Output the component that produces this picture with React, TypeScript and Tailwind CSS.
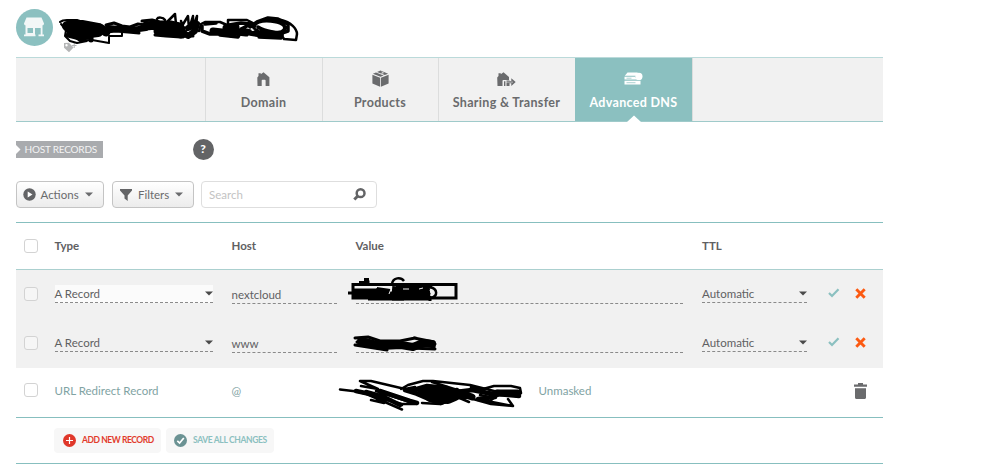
import React, { useState } from 'react';

const Caret: React.FC<{ className?: string }> = ({ className }) => (
  <svg className={className} width="8" height="5" viewBox="0 0 8 5" fill="currentColor">
    <path d="M0 0.5h8L4 4.6z" />
  </svg>
);

const StoreLogo: React.FC = () => (
  <svg className="-ml-px" width="38" height="38" viewBox="0 0 38 38">
    <circle cx="19.500" cy="19.500" r="18.500" fill="#8bc0c0" />
    <g fill="#f2f7f7">
      <path d="M11.500 9.500h15l2.500 6c0 1.200-.6 1.800-1.600 1.800H10.600C9.600 17.300 9 16.700 9 15.500z" />
      <path d="M10.500 17h17v3h-17zM10.500 19h2v7.500h-2zM25.700 19h1.800v7.500h-1.800zM18 19h2v8h-2zM12 25h7v1.500h-7zM9 26.500h11.500v1.700H9zM23.500 26.500H29v1.700h-5.500z" />
    </g>
  </svg>
);

const HouseIcon: React.FC = () => (
  <svg width="13" height="14" viewBox="0 0 13 14" fill="#6a6b6d">
    <path d="M.3 5.500L1.500 4V1.200h2.300v1L6.500.2l5.900 5V14H8.600V8.500c0-.5-.3-.8-.8-.8H5.500c-.5 0-.8.3-.8.8V14H.5z" />
  </svg>
);

const BoxIcon: React.FC = () => (
  <svg width="17" height="17" viewBox="0 0 17 17" fill="#6a6b6d">
    <path d="M.4 4.700l7.700 3v9L.4 13.500zM16.600 4.700l-7.700 3v9l7.700-3.200z" />
    <path d="M.9 3.700L4 2.400l7.700 3.100-3.200 1.300zM5 2L8.500.5l7.600 3.200-3.300 1.400z" />
    <path d="M9.500 2l2 .8-2.200.9" fill="none" stroke="#f1f1f1" strokeWidth=".7" />
  </svg>
);

const TransferIcon: React.FC = () => (
  <svg width="19" height="14" viewBox="0 0 19 14" fill="#6a6b6d">
    <path d="M.2 5.500L1.500 4V1.200h2.300v1L6.500.2l5.500 4.800V8H6.500c-.6 0-1 .4-1 1v5H.5z" />
    <path d="M7 9.300h1.400V14H7zM9.500 9h4.800V6.200l4.400 3.900-4.400 3.800v-2.600H9.500zM9.500 8.500h3v5.500h-3z" />
    <path d="M9 10.100h7" stroke="#f1f1f1" strokeWidth=".6" />
  </svg>
);

const ServerIcon: React.FC = () => (
  <svg width="19" height="13" viewBox="0 0 19 13" fill="#fff">
    <path d="M3.500.5h10.300L12 3.800H.8zM.5 4.700h10.800c.3 1.500 1.300 2.400 2.700 2.800H.5zM.5 8.800h16v3.700H.5z" />
    <circle cx="14.900" cy="4.400" r="3.600" />
    <path d="M2.500 6.200h5M2.500 10.700h9" stroke="#8bc0c0" strokeWidth=".7" />
  </svg>
);

const tabs = [
  { label: 'Domain', icon: <HouseIcon />, width: 'w-[117px]' },
  { label: 'Products', icon: <BoxIcon />, width: 'w-[116px]' },
  { label: 'Sharing & Transfer', icon: <TransferIcon />, width: 'w-[137px]' },
  { label: 'Advanced DNS', icon: <ServerIcon />, width: 'w-[117px]' },
];

const Checkbox: React.FC = () => (
  <span className="-mt-px ml-2 block h-[14px] w-[14px] rounded-[3px] border border-[#d3d3d3] bg-white/40" />
);

const Select: React.FC<{ value: string; className: string }> = ({ value, className }) => (
  <div className={`-mt-px flex h-[18px] items-center justify-between border-b border-dashed border-[#8a8a8a] ${className}`}>
    <span>{value}</span>
    <Caret className="text-[#4a4a4a]" />
  </div>
);

const rowGrid = 'grid grid-cols-[39px_177px_124px_346.500px_119px_26px_28px]';

interface RecordRowProps {
  host: string;
  active?: boolean;
}

const RecordRow: React.FC<RecordRowProps> = ({ host, active }) => (
  <div className={`${rowGrid} h-[49px] items-center bg-[#f1f1f1] text-[11.500px] text-[#5f6062]`}>
    <Checkbox />
    <Select value="A Record" className={active ? 'w-[158px] bg-[#fbfbfb]' : 'w-[158px]'} />
    <div className="mt-px h-[18px] w-[105px] border-b border-dashed border-[#8a8a8a]">{host}</div>
    <div className="mt-px h-[18px] w-[327px] border-b border-dashed border-[#8a8a8a]" />
    <Select value="Automatic" className="w-[105px]" />
    <svg className="ml-[7px] -mt-[3px]" width="12" height="10" viewBox="0 0 12 10" fill="none">
      <path d="M1 5l3 3 6.500-6.800" stroke="#8bc0c0" strokeWidth="2.200" />
    </svg>
    <svg className="ml-2 -mt-[3px]" width="11" height="11" viewBox="0 0 11 11">
      <path d="M1.300 1.300l8.400 8.400M9.700 1.300L1.300 9.700" stroke="#fc5a12" strokeWidth="2.900" />
    </svg>
  </div>
);

const Scribbles: React.FC = () => (
  <svg
    className="pointer-events-none absolute left-0 top-0"
    width="1000"
    height="474"
    viewBox="0 0 1000 474"
    fill="none"
    stroke="#000"
    strokeWidth="2"
    strokeLinejoin="round"
    strokeLinecap="round"
  >
    {/* domain name */}
    <path d="M60 22L63 20.500L67 20L77 20L83 22M61 24L66 30L65 36L70 41L77 43L87 41M74 37L80 41L92 40L109 43L109 37M109 36L122 36L122 33" />
    <path strokeWidth="10" d="M67 26L82 25L98 28L98 32L82 34L72 31Z" />
    <path strokeWidth="5" d="M68 35L80 38L91 37L91 40" />
    <path strokeWidth="9" d="M100 28L106 32" />
    <path strokeWidth="3" d="M106 25L114 23L122 26L130 27L138 24L145 25M106 32L116 31L128 32L139 33" />
    <path strokeWidth="6" d="M108 28L120 29L132 30L146 28" />
    <path strokeWidth="9" d="M146 26L156 25L168 27L181 29M158 31L170 32L182 34" />
    <path strokeWidth="3" d="M142 21L152 20L160 22L171 22L180 24M155 35L166 36L181 37M193 36L182 36" />
    <path strokeWidth="2.500" d="M157 19C158 17 163 17 165 20M168 21L175 14L176 24M182 26L188 16L189 29L193 16L193 28L197 16L196 30M181 21L185 33" />
    <path strokeWidth="6" d="M182 31L188 36L195 31L197 24L188 28" />
    <path strokeWidth="2.500" d="M199 31L201 24L205 22L220 22L227 25L229 29M228 20L247 20L253 23M228 20L228 24" />
    <path strokeWidth="3.500" d="M202 26L202 31L210 34L222 34M205 24L216 23M220 35L238 37L240 33M250 34L262 36M259 37L281 38L282 35" />
    <path strokeWidth="7" d="M213 31L222 32L232 34M226 28L236 27M228 31L246 33M263 33L280 35" />
    <path strokeWidth="3.500" d="M229 25L241 23L251 24L241 29L250 31M250 27L257 22L268 18L278 19L288 24L288 31L279 34M254 28C254 22 262 20 271 21S287 25 284 30S264 31 258 27M250 33L268 31L281 34M256 30L263 35" />
    <path strokeWidth="2.500" d="M281 20C291 22 297 29 297 34L296 40L284 39L282 36" />
    {/* first record */}
    <g strokeLinejoin="miter" strokeLinecap="butt">
      <path strokeWidth="3" d="M353 284.500h103v13.500H353z" />
      <path strokeWidth="9" d="M354 293h28M368 296h62" />
      <path strokeWidth="8" d="M376 291l14 2M392 290l24 2 14-2M400 296l22-5" />
      <path strokeWidth="5" d="M359 283.500h8v-3h2M396 286h36M404 298h-12M416 296l14-3" />
      <path strokeWidth="3" d="M364 279.500h5M348 293h8M430 296v5" />
      <path strokeWidth="2.500" d="M392 284c1-7 9-7 12-3M430 287c8 2 8 9 1 11" />
      <path stroke="#f1f1f1" strokeWidth="1" d="M357 287.500h20M403 289h6M419 289l4-1M391 289l-2 5M430 290l1 3" />
    </g>
    {/* second record */}
    <path strokeWidth="3" d="M355 338l13-1 12 4 20 0 15-3 20 6M355 345l32 5M414 338l20 4v7M410 348l25 1M357 342l30 8" />
    <path strokeWidth="8" d="M361 341l20 5 20-1 12 2 10-4 9 1M366 343l21 3" />
    {/* redirect target */}
    <path strokeWidth="2.500" d="M340 389.500l17 2M361 386l17 3-18 -8M360 381l11 0 34 8 10-2M355 391L386 399L402 405M362 392L402 409.500M371 400L384 403L372 396L402 404L416 404L376 391M401 389l7-4 15-4 10 0 37 4 32 8M432 382l38 12M483 389l11-3h17l9 2 1 5-24-2M480 395l14 3-6 4-6-3M487 401l26 5-5-7M513 406l-22-2-18-5M422 403l18 1 10-3M455 396l14 6" />
    <path strokeWidth="4.500" d="M356 391l28 6 16 8M366 392l18 5 12 6M380 391l30 10 7 2M410 391l17-5 20 2-30 6 14 6 10 3 13-6 12 0M405 390l26 8M423 388l14 7 20-5-24 10M447 393l25-3 25 5M478 399l17-2M472 387l15 6 32 3" />
    <path strokeWidth="10" d="M422 391l23 0 9 3M430 397l18 2 7-3" />
    <path strokeWidth="7" d="M497 393h21M456 392l16 5" />
  </svg>
);

const App: React.FC = () => {
  const [activeTab, setActiveTab] = useState('Advanced DNS');

  return (
    <div className="relative h-[474px] w-[1000px] overflow-hidden bg-white pl-[15.500px] font-['Lato',sans-serif] text-[#5f6062]">
      <div className="w-[867.500px]">
        <header className="flex h-[57px] pt-2">
          <StoreLogo />
          <svg className="ml-2.5 mt-[34px]" width="14" height="11" viewBox="0 0 14 11" fill="#b4b5b6">
            <path fillRule="evenodd" d="M1 1l5-.3 4.500 4.800L6 10.300 1 5.800zM3.500 2a1.200 1.200 0 100 2.400 1.200 1.200 0 000-2.400z" />
            <path d="M10.700 1h1v2h1.800v1h-1.800v2h-1V4H9V3h1.700z" />
          </svg>
        </header>

        <nav className="flex h-[65px] border-b border-t border-b-[#9fcaca] border-t-[#bbdada] bg-[#f1f1f1] pl-[189px]">
          {tabs.map((tab) => (
            <button
              key={tab.label}
              onClick={() => setActiveTab(tab.label)}
              className={`relative flex flex-col items-center border-l pt-3 ${tab.width} ${
                activeTab === tab.label ? 'border-[#8bc0c0] bg-[#8bc0c0] text-white' : 'border-[#dcdddd] text-[#6a6b6d]'
              }`}
            >
              <span className="flex h-[17px] items-center">{tab.icon}</span>
              <span className="mt-[7px] whitespace-nowrap text-[12.500px] font-bold leading-[18px] tracking-[0.32px]">{tab.label}</span>
              {activeTab === tab.label && (
                <svg className="absolute -bottom-px left-[51px]" width="14" height="7" viewBox="0 0 14 7" fill="#fff">
                  <path d="M0 7l7-6.500L14 7z" />
                </svg>
              )}
            </button>
          ))}
          <div className="border-l border-[#dcdddd]" />
        </nav>

        <div className="mt-4 flex h-[22px] items-center">
          <div className="flex h-[17px] w-[87px] items-center bg-[#a9abae] text-[10px] text-[#f4f4f4]">
            <svg width="5" height="9" viewBox="0 0 5 9" fill="#fff">
              <path d="M0 0l4.500 4.500L0 9z" />
            </svg>
            <span className="ml-1 whitespace-nowrap tracking-[-0.2px]">HOST RECORDS</span>
          </div>
          <span className="ml-[90px] flex h-[21px] w-[21px] items-center justify-center rounded-full bg-[#636466] text-[12px] font-black text-white">?</span>
        </div>

        <div className="mt-[21px] flex h-[27px] text-[11.500px] text-[#6a6b6d]">
          <button className="flex w-[88.500px] items-center rounded-[4px] border border-[#c4c4c4] bg-gradient-to-b from-white to-[#ececec] pl-1.5">
            <svg className="shrink-0" width="13" height="13" viewBox="0 0 13 13">
              <circle cx="6.500" cy="6.500" r="6.200" fill="#636466" />
              <path d="M4.700 3.500l4.800 3-4.800 3z" fill="#fff" />
            </svg>
            <span className="ml-[5px]">Actions</span>
            <Caret className="ml-1.5" />
          </button>
          <button className="ml-2 flex w-[82px] items-center rounded-[4px] border border-[#c4c4c4] bg-gradient-to-b from-white to-[#ececec] pl-[7px]">
            <svg className="shrink-0" width="12" height="12" viewBox="0 0 12 12" fill="#636466">
              <path d="M0 0h12v1.500L7.700 6.500V12L4.500 9.500v-3L0 1.500z" />
            </svg>
            <span className="ml-1.5">Filters</span>
            <Caret className="ml-1.5" />
          </button>
          <div className="ml-[7px] flex w-[176px] items-center justify-between rounded-[4px] border border-[#dedede] pl-[7px] pr-2.5">
            <input placeholder="Search" className="w-[120px] outline-none placeholder:text-[#c3c3c3]" />
            <svg width="13" height="13" viewBox="0 0 13 13" fill="none" stroke="#636466">
              <circle cx="7.600" cy="5.200" r="3.900" strokeWidth="2.500" />
              <path d="M4.800 8L1.300 11.500" strokeWidth="3" />
            </svg>
          </div>
        </div>

        <section className="mt-[14px] border-b border-t border-[#87bfbf]">
          <div className={`${rowGrid} h-[47px] items-center border-b border-b-[#abd0cf] text-[11.500px] font-bold`}>
            <Checkbox />
            <span>Type</span>
            <span>Host</span>
            <span>Value</span>
            <span>TTL</span>
          </div>
          <RecordRow host="nextcloud" active />
          <RecordRow host="www" />
          <div className={`${rowGrid} h-[50px] items-center border-b border-b-[#87bfbf] pb-1 text-[11.500px] text-[#7fa3a3]`}>
            <Checkbox />
            <span>URL Redirect Record</span>
            <span>@</span>
            <span className="pl-[183px]">Unmasked</span>
            <span />
            <span />
            <svg className="ml-[7px]" width="13" height="16" viewBox="0 0 13 16" fill="#6a6b6d">
              <path d="M4 0h5v1.500h4v2.300H0V1.500h4zM1 5.200h11V14.500c0 .8-.6 1.500-1.500 1.500h-8C1.600 16 1 15.300 1 14.500z" />
            </svg>
          </div>
          <div className="flex h-[45px] items-center gap-[5px] pl-[38.500px] text-[8.500px] font-bold">
            <button className="flex h-[25px] w-[107px] items-center rounded-[4px] bg-[#f7f7f7] pl-[9px] text-[#e23b2c]">
              <svg className="shrink-0" width="13" height="13" viewBox="0 0 13 13">
                <circle cx="6.500" cy="6.500" r="6.500" fill="#e0372a" />
                <path d="M6.500 3v7M3 6.500h7" stroke="#fff" strokeWidth="1.200" />
              </svg>
              <span className="ml-1.5 whitespace-nowrap tracking-[-0.42px]">ADD NEW RECORD</span>
            </button>
            <button className="flex h-[25px] w-[108px] items-center rounded-[4px] bg-[#f7f7f7] pl-2 text-[#8bc0c0]">
              <svg className="shrink-0" width="13" height="13" viewBox="0 0 13 13">
                <circle cx="6.500" cy="6.500" r="6.500" fill="#6b9293" />
                <path d="M3.300 6.800l2.300 2.200 4.200-5" stroke="#fff" strokeWidth="1.700" fill="none" />
              </svg>
              <span className="ml-1.5 whitespace-nowrap tracking-[-0.35px]">SAVE ALL CHANGES</span>
            </button>
          </div>
        </section>
      </div>
      <Scribbles />
    </div>
  );
};

export default App;
